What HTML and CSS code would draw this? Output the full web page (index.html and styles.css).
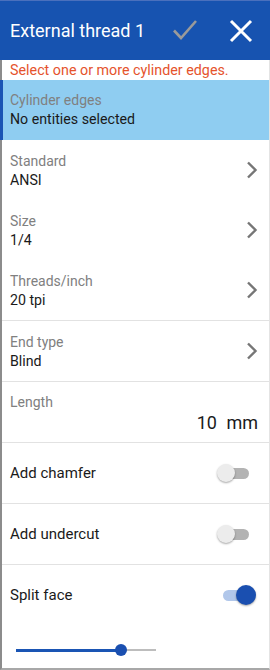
FILE: index.html
```html
<!DOCTYPE html>
<html>
<head>
<meta charset="utf-8">
<link rel="stylesheet" href="styles.css">
</head>
<body>
<div class="panel">
  <header class="header">
    <span class="title">External thread 1</span>
    <div class="actions">
      <svg class="icon" width="28" height="28" viewBox="0 0 28 28"><path d="M3 13.5 L10 21 L25 4" fill="none" stroke="#9a9a9a" stroke-width="2.6"/></svg>
      <svg class="icon" width="24" height="24" viewBox="0 0 24 24"><path d="M2 2 L22 22 M22 2 L2 22" fill="none" stroke="#fff" stroke-width="3"/></svg>
    </div>
  </header>
  <div class="body">
    <div class="message">Select one or more cylinder edges.</div>
    <div class="row selection">
      <div class="label">Cylinder edges</div>
      <div class="value">No entities selected</div>
    </div>
    <div class="row nav">
      <div class="text"><div class="label">Standard</div><div class="value">ANSI</div></div>
      <svg class="chev" width="12" height="18" viewBox="0 0 12 18"><path d="M2 1.5 L9.5 9 L2 16.5" fill="none" stroke="#767676" stroke-width="2.4"/></svg>
    </div>
    <div class="row nav">
      <div class="text"><div class="label">Size</div><div class="value">1/4</div></div>
      <svg class="chev" width="12" height="18" viewBox="0 0 12 18"><path d="M2 1.5 L9.5 9 L2 16.5" fill="none" stroke="#767676" stroke-width="2.4"/></svg>
    </div>
    <div class="row nav divided">
      <div class="text"><div class="label">Threads/inch</div><div class="value">20 tpi</div></div>
      <svg class="chev" width="12" height="18" viewBox="0 0 12 18"><path d="M2 1.5 L9.5 9 L2 16.5" fill="none" stroke="#767676" stroke-width="2.4"/></svg>
    </div>
    <div class="row nav divided">
      <div class="text"><div class="label">End type</div><div class="value">Blind</div></div>
      <svg class="chev" width="12" height="18" viewBox="0 0 12 18"><path d="M2 1.5 L9.5 9 L2 16.5" fill="none" stroke="#767676" stroke-width="2.4"/></svg>
    </div>
    <div class="row length divided">
      <div class="label">Length</div>
      <div class="big">10 mm</div>
    </div>
    <div class="row toggle-row divided">
      <span class="tlabel">Add chamfer</span>
      <span class="switch"><span class="track"></span><span class="knob"></span></span>
    </div>
    <div class="row toggle-row divided">
      <span class="tlabel">Add undercut</span>
      <span class="switch"><span class="track"></span><span class="knob"></span></span>
    </div>
    <div class="row toggle-row">
      <span class="tlabel">Split face</span>
      <span class="switch on"><span class="track"></span><span class="knob"></span></span>
    </div>
    <div class="slider-row">
      <div class="slider">
        <div class="fill"></div>
        <div class="thumb"></div>
        <div class="rest"></div>
      </div>
    </div>
  </div>
</div>
</body>
</html>
```
FILE: styles.css
```css
* { box-sizing: border-box; }
html, body { margin: 0; padding: 0; background: #fff; }
body { font-family: Roboto, "Noto Sans", sans-serif; }
.panel { width: 270px; height: 670px; display: flex; flex-direction: column; overflow: hidden; }
.header {
  height: 60px; flex: none;
  background: #1753b0;
  border-top: 1px solid #4a70bd;
  display: flex; align-items: center; justify-content: space-between;
  padding: 0 17px 0 10px;
}
.title { color: #fff; font-size: 18px; line-height: 24px; }
.actions { display: flex; align-items: center; gap: 30px; }
.icon { display: block; }
.body {
  flex: 1;
  border-left: 2px solid #8c8c8c;
  border-right: 1px solid #e4e4e4;
  border-bottom: 2px solid #a8a8a8;
  display: flex; flex-direction: column;
}
.message { height: 20px; padding-left: 8px; color: #e5532c; font-size: 14.3px; line-height: 20px; }
.row { flex: none; }
.label { color: #808080; font-size: 14px; line-height: 18px; }
.value { color: #1a1a1a; font-size: 14.2px; line-height: 20px; }
.selection {
  height: 60px;
  margin-left: -2px;
  background: #8fcdf1;
  border-left: 3px solid #1a55b4;
  padding: 11px 10px 0 7px;
}
.nav {
  height: 60px;
  display: flex; align-items: center; justify-content: space-between;
  padding: 0 11px 0 8px;
}
.nav .text { padding-top: 2px; }
.divided { border-bottom: 1px solid #e2e2e2; height: 61px; }
.nav.divided .text { padding-top: 1px; }
.length { height: 61px; padding: 11px 11px 0 8px; }
.big { text-align: right; color: #1a1a1a; font-size: 18px; line-height: 24px; word-spacing: 5px; }
.toggle-row {
  height: 61px;
  display: flex; align-items: center; justify-content: space-between;
  padding: 0 20px 0 8px;
}
.toggle-row:not(.divided) { height: 60px; }
.tlabel { color: #1a1a1a; font-size: 15px; }
.switch { position: relative; width: 32px; height: 20px; display: block; }
.switch .track {
  position: absolute; left: 8px; right: 0; top: 5px; height: 11px;
  border-radius: 6px; background: #b3b3b3;
}
.switch .knob {
  position: absolute; left: 0; top: 1px; width: 18px; height: 18px; border-radius: 50%;
  background: #ececec; box-shadow: 0 1px 2px rgba(0,0,0,0.35);
}
.switch.on { width: 33px; margin-right: -7px; }
.switch.on .track { left: 0; right: 6px; background: #b1c7ea; }
.switch.on .knob { left: auto; right: 0; top: 0; width: 20px; height: 20px; background: #1a4fb0; }
.slider-row { flex: 1; padding: 0 0 0 14px; display: flex; align-items: flex-start; padding-top: 19px; }
.slider { width: 140px; height: 12px; display: flex; align-items: center; }
.slider .fill { width: 102px; height: 3px; background: #1a55b4; }
.slider .thumb { width: 12px; height: 12px; border-radius: 50%; background: #1a4fb0; margin: 0 -3px; position: relative; }
.slider .rest { flex: 1; height: 2px; background: #bdbdbd; }
```
